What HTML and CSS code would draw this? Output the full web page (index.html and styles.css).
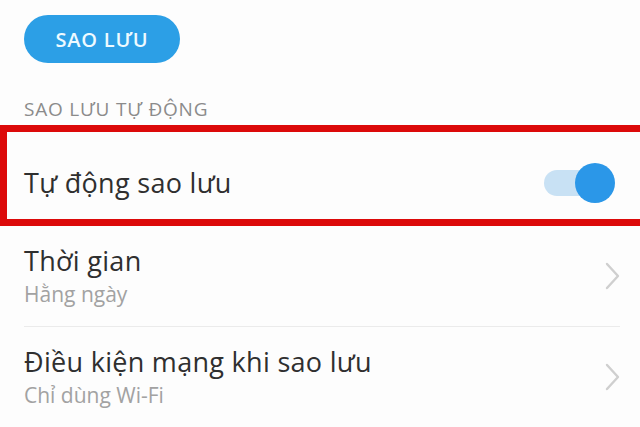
FILE: index.html
```html
<!DOCTYPE html>
<html lang="vi">
<head>
    <meta charset="UTF-8">
    <meta name="viewport" content="width=device-width, initial-scale=1.0">
    <title>Sao lưu</title>
    <link rel="stylesheet" href="styles.css">
</head>
<body>
    <div class="page">
        <button class="backup-btn">SAO LƯU</button>

        <div class="section-title">SAO LƯU TỰ ĐỘNG</div>

        <div class="row row-toggle highlighted">
            <span class="row-title">Tự động sao lưu</span>
            <span class="switch on"><span class="knob"></span></span>
        </div>

        <div class="row row-link">
            <div class="row-text">
                <div class="row-title">Thời gian</div>
                <div class="row-sub">Hằng ngày</div>
            </div>
            <svg class="chevron" width="16" height="28" viewBox="0 0 16 28">
                <path d="M3 2 L14 14 L3 26" fill="none" stroke="#cfcfcf" stroke-width="2.4" stroke-linecap="round" stroke-linejoin="round"/>
            </svg>
        </div>

        <div class="row row-link">
            <div class="row-text">
                <div class="row-title">Điều kiện mạng khi sao lưu</div>
                <div class="row-sub">Chỉ dùng Wi-Fi</div>
            </div>
            <svg class="chevron" width="16" height="28" viewBox="0 0 16 28">
                <path d="M3 2 L14 14 L3 26" fill="none" stroke="#cfcfcf" stroke-width="2.4" stroke-linecap="round" stroke-linejoin="round"/>
            </svg>
        </div>
    </div>
</body>
</html>
```

FILE: styles.css
```css
html, body {
    margin: 0;
    padding: 0;
    background-color: #fdfdfd;
    overflow: hidden;
}
body {
    font-family: "Open Sans", "Noto Sans", sans-serif;
    color: #333;
}
.page {
    padding-top: 15px;
}
.backup-btn {
    display: block;
    margin-left: 24px;
    width: 156px;
    height: 48px;
    border: none;
    border-radius: 24px;
    background-color: #2c9fe6;
    color: #eefaff;
    font-family: inherit;
    font-size: 20px;
    font-weight: 600;
    letter-spacing: 0.8px;
    padding: 0;
}
.section-title {
    margin: 35px 0 0 24px;
    font-size: 19px;
    line-height: 22px;
    letter-spacing: 0.8px;
    color: #8b8b8b;
}
.row {
    display: flex;
    align-items: center;
    justify-content: space-between;
}
.row-title {
    font-size: 27px;
    line-height: 32px;
    letter-spacing: 0.3px;
    color: #2f2f2f;
}
.row-sub {
    margin-top: 5px;
    font-size: 21px;
    line-height: 24px;
    color: #a2a2a2;
}
.highlighted {
    margin: 5px -10px 0 0;
    height: 73px;
    padding: 14px 36px 0 17px;
    border: 7px solid #dc0a0a;
    border-right: none;
}
.switch {
    position: relative;
    width: 56px;
    height: 26px;
    border-radius: 13px;
    background-color: #c8e1f4;
    margin-right: 14px;
}
.knob {
    position: absolute;
    left: 31px;
    top: -7px;
    width: 40px;
    height: 40px;
    border-radius: 50%;
    background-color: #2b97e8;
}
.row-link {
    margin: 0 20px 0 24px;
    padding: 19px 0 20px;
    border-bottom: 1px solid #ebebeb;
}
.chevron {
    display: block;
}
```
